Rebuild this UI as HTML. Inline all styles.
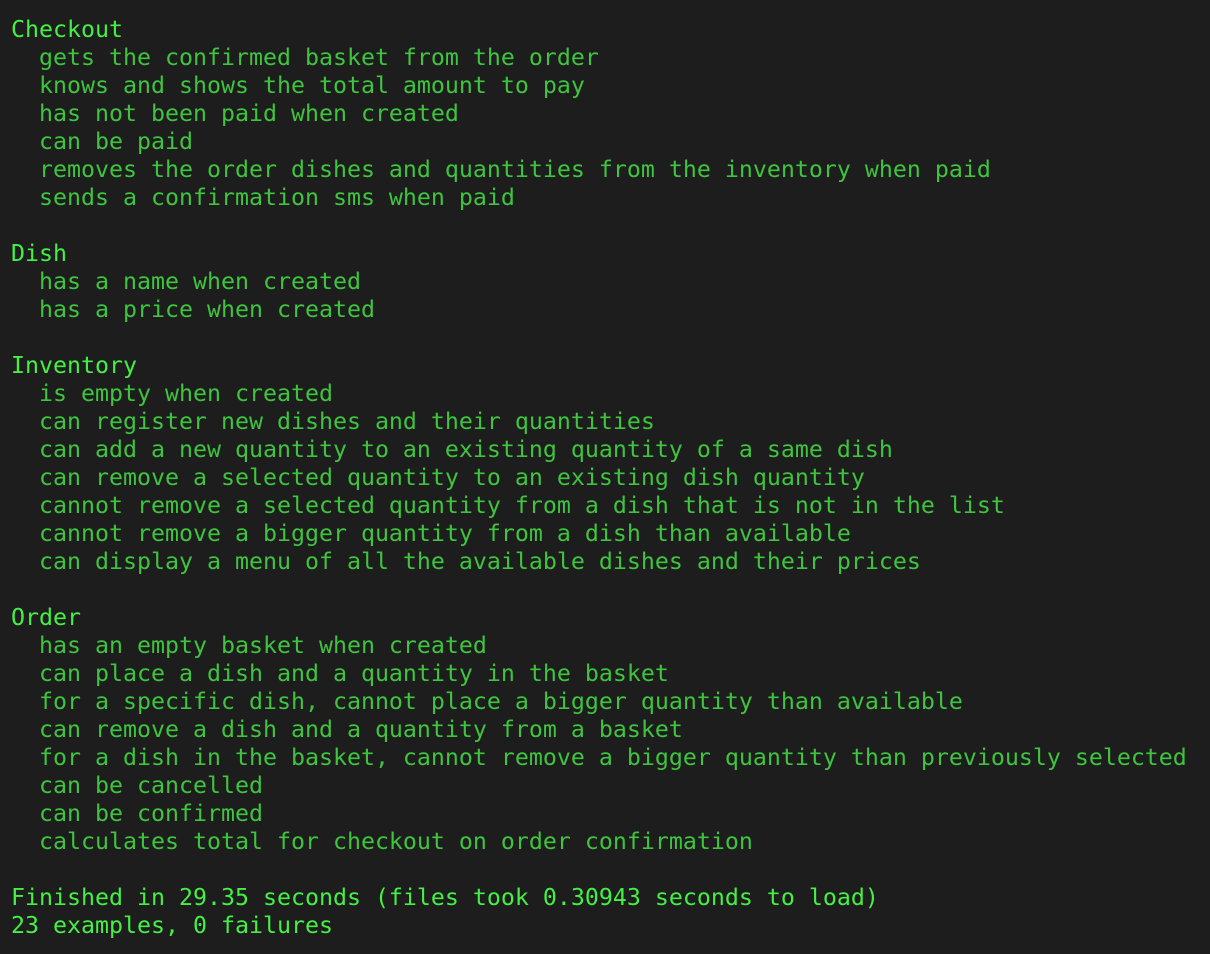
<!DOCTYPE html>
<html><head><style>
html,body{margin:0;padding:0;background:#1d1d1d;width:1210px;height:954px;overflow:hidden}
pre{margin:0;padding:16px 0 0 11px;font-family:"DejaVu Sans Mono","Liberation Mono",monospace;font-size:23.25px;line-height:28px;color:#3ec43e;letter-spacing:0}
.h{color:#44f044}
</style></head><body><pre><span class="h">Checkout</span>
  gets the confirmed basket from the order
  knows and shows the total amount to pay
  has not been paid when created
  can be paid
  removes the order dishes and quantities from the inventory when paid
  sends a confirmation sms when paid

<span class="h">Dish</span>
  has a name when created
  has a price when created

<span class="h">Inventory</span>
  is empty when created
  can register new dishes and their quantities
  can add a new quantity to an existing quantity of a same dish
  can remove a selected quantity to an existing dish quantity
  cannot remove a selected quantity from a dish that is not in the list
  cannot remove a bigger quantity from a dish than available
  can display a menu of all the available dishes and their prices

<span class="h">Order</span>
  has an empty basket when created
  can place a dish and a quantity in the basket
  for a specific dish, cannot place a bigger quantity than available
  can remove a dish and a quantity from a basket
  for a dish in the basket, cannot remove a bigger quantity than previously selected
  can be cancelled
  can be confirmed
  calculates total for checkout on order confirmation

<span class="h">Finished in 29.35 seconds (files took 0.30943 seconds to load)</span>
<span class="h">23 examples, 0 failures</span></pre></body></html>
